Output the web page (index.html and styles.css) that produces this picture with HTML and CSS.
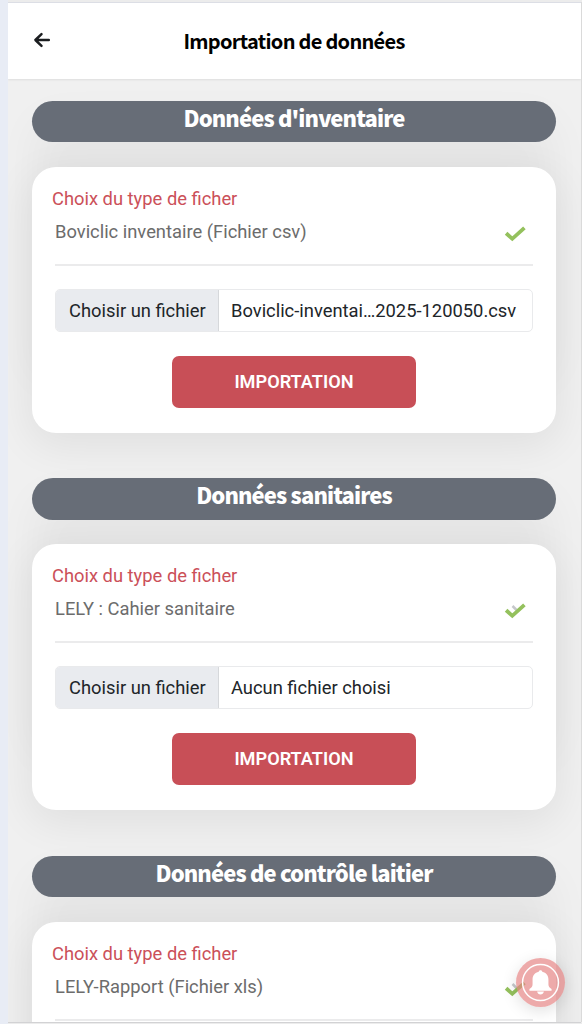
FILE: index.html
```html
<!DOCTYPE html>
<html lang="fr">
<head>
<meta charset="utf-8">
<title>Importation de données</title>
<link rel="stylesheet" href="styles.css">
</head>
<body>
<div class="app">
  <header class="header">
    <svg class="back" viewBox="0 0 18 18"><path d="M8.500 3.200 2.400 9l6.100 5.800M2.700 9H15.800" fill="none" stroke="#1b1d20" stroke-width="2.500" stroke-linecap="round" stroke-linejoin="round"/></svg>
    <h1 class="title">Importation de données</h1>
  </header>
  <main class="content">
    <section class="group">
      <h2 class="pill">Données d'inventaire</h2>
      <div class="card">
        <div class="label">Choix du type de ficher</div>
        <div class="select"><span>Boviclic inventaire (Fichier csv)</span><svg class="check" viewBox="0 0 22 16"><path d="m3.500 8.500 4.800 4.300L19 3.200" fill="none" stroke="#94c15d" stroke-width="3.800" stroke-linecap="square"/></svg></div>
        <div class="file"><span class="choose">Choisir un fichier</span><span class="name">Boviclic-inventai…2025-120050.csv</span></div>
        <button class="import">IMPORTATION</button>
      </div>
    </section>
    <section class="group">
      <h2 class="pill">Données sanitaires</h2>
      <div class="card">
        <div class="label">Choix du type de ficher</div>
        <div class="select"><span>LELY : Cahier sanitaire</span><svg class="check" viewBox="0 0 22 16"><path d="m8.500 3 4 4" stroke="#c5c7ca" stroke-width="2.500"/><path d="m3.500 8.500 4.800 4.300L19 3.200" fill="none" stroke="#94c15d" stroke-width="3.800" stroke-linecap="square"/></svg></div>
        <div class="file"><span class="choose">Choisir un fichier</span><span class="name">Aucun fichier choisi</span></div>
        <button class="import">IMPORTATION</button>
      </div>
    </section>
    <section class="group">
      <h2 class="pill">Données de contrôle laitier</h2>
      <div class="card">
        <div class="label">Choix du type de ficher</div>
        <div class="select"><span>LELY-Rapport (Fichier xls)</span><svg class="check" viewBox="0 0 22 16"><path d="m8.500 3 4 4" stroke="#c5c7ca" stroke-width="2.500"/><path d="m3.500 8.500 4.800 4.300L19 3.200" fill="none" stroke="#94c15d" stroke-width="3.800" stroke-linecap="square"/></svg></div>
      </div>
    </section>
  </main>
</div>
<div class="bell">
  <svg viewBox="0 0 50 50"><circle cx="25" cy="25" r="18.300" fill="none" stroke="#fff" stroke-width="1.500"/><path d="M25 12.600c1 0 1.600.600 1.800 1.500 4 .800 6.300 3.700 6.300 8v4.700c0 2.400 1 3.500 3.200 4.800v1.700H13.700v-1.700c2.200-1.300 3.200-2.400 3.200-4.800v-4.700c0-4.300 2.300-7.200 6.300-8 .2-.9.800-1.500 1.800-1.500zM21.500 34.300h7c-.5 2-1.800 3-3.500 3s-3-1-3.500-3z" fill="#fff"/></svg>
</div>
</body>
</html>
```
FILE: styles.css
```css
* { box-sizing: border-box; }
body {
  margin: 0;
  height: 1024px;
  overflow: hidden;
  padding: 2px 1px 2px 8px;
  background: linear-gradient(90deg, #e8ecf5 0 8px, #ececec 8px);
  font-family: Roboto, "Liberation Sans", sans-serif;
}
.app {
  height: 1020px;
  overflow: hidden;
  background: #f0f0f0;
  border-top: 1px solid #dcdee5;
  box-shadow: 0 1px 0 #d2d2d4, 1px 0 0 #dadada;
}
.header {
  position: relative;
  z-index: 1;
  height: 76px;
  display: grid;
  grid-template-columns: 24px 1fr 24px;
  align-items: center;
  background: #fff;
  box-shadow: 0 1px 2px rgba(0, 0, 0, .08);
}
.back { width: 18px; height: 18px; margin-left: 25px; margin-bottom: 2px; }
.title {
  margin: 0 1px 0 0;
  text-align: center;
  font: 700 20px/30px "Noto Sans CJK SC", sans-serif;
  letter-spacing: -.72px;
  color: #000;
  white-space: nowrap;
}
.content { padding: 21.9px 25px 0 24px; }
.group { height: 377.5px; }
.pill {
  position: relative;
  z-index: 1;
  margin: 0 0 24.5px;
  height: 41.5px;
  border-radius: 21px;
  background: #676d77;
  color: #fff;
  text-align: center;
  font: 900 22px/32px "Noto Sans CJK SC", sans-serif;
  letter-spacing: -.88px;
  white-space: nowrap;
}
.card {
  height: 266px;
  padding: 20px 23px 0;
  border-radius: 24px;
  background: #fff;
  box-shadow: 0 -50px 40px rgba(0, 0, 0, .04), 0 10px 40px 4px rgba(0, 0, 0, .065);
}
.label {
  margin-left: -3px;
  font-size: 18.35px;
  line-height: 24px;
  color: #cb5059;
}
.select {
  height: 55px;
  display: flex;
  justify-content: space-between;
  border-bottom: 2px solid #ebebec;
  font-size: 18.35px;
  line-height: 42px;
  color: #6c6c6c;
}
.check { width: 22px; height: 16px; margin: 15px 7px 0 0; }
.file {
  height: 43px;
  margin-top: 23px;
  display: flex;
  border: 1.5px solid #e9eaec;
  border-radius: 5px;
  overflow: hidden;
  font-size: 18.35px;
  line-height: 41px;
  color: #212529;
  white-space: nowrap;
}
.choose {
  width: 163px;
  flex: none;
  padding-left: 13px;
  background: #e9ebef;
  border-right: 1px solid #d6d8db;
}
.name { padding-left: 12px; }
.import {
  display: block;
  width: 244px;
  height: 52px;
  margin: 24px auto 0;
  padding: 0;
  border: 0;
  border-radius: 7px;
  background: #c84f57;
  color: #fff;
  font: 600 18.15px/52px Roboto, sans-serif;
}
.bell {
  position: absolute;
  left: 516px;
  top: 958px;
  width: 49px;
  height: 49px;
  border-radius: 50%;
  background: rgba(228, 130, 130, .68);
  box-shadow: 0 4px 16px rgba(0, 0, 0, .12);
}
.bell svg { display: block; width: 49px; height: 49px; }
```
